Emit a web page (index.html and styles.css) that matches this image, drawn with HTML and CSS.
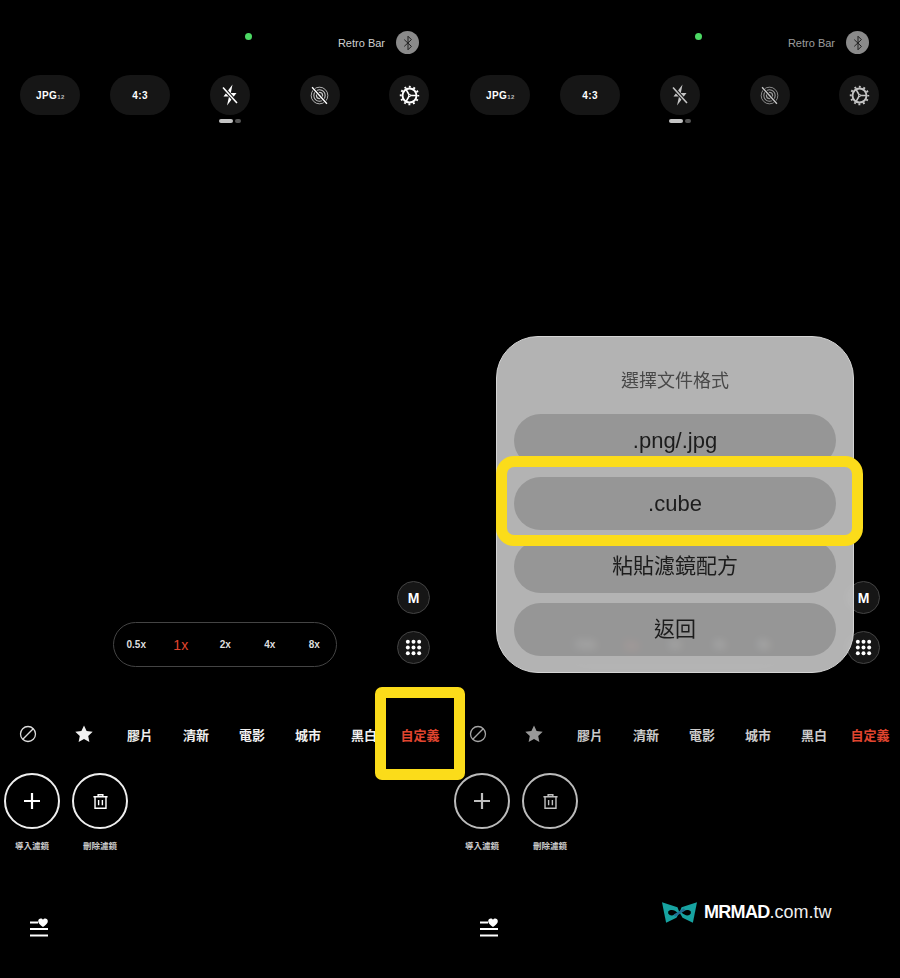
FILE: index.html
```html
<!DOCTYPE html>
<html lang="zh-Hant">
<head>
	<meta charset="UTF-8">
	<title>導入濾鏡</title>
	<link rel="stylesheet" href="styles.css">
</head>
<body>
	<svg class="sprite" xmlns="http://www.w3.org/2000/svg">
		<symbol id="i-bt" viewBox="0 0 24 24">
			<path d="M7 7.500l9.500 9-4.500 4.500V3l4.500 4.500-9.500 9" fill="none" stroke="currentColor" stroke-width="1.300"/>
		</symbol>
		<symbol id="i-flash" viewBox="0 0 24 24">
			<path d="M14.500 1.500L5.500 13.500h5.500L9 22.500l9.500-12.500h-5.700z" fill="currentColor"/>
			<path d="M5 4.500l14 15.500" stroke="#161616" stroke-width="3.600"/>
			<path d="M5 4.500l14 15.500" stroke="currentColor" stroke-width="1.600"/>
		</symbol>
		<symbol id="i-live" viewBox="0 0 24 24">
			<g fill="none" stroke="currentColor">
				<circle cx="12" cy="12" r="9.500" stroke-width="1" opacity=".75"/>
				<circle cx="12" cy="12" r="6.500" stroke-width="1.200" opacity=".75"/>
				<circle cx="12" cy="12" r="3.500" stroke-width="1.400" opacity=".75"/>
			</g>
			<path d="M3.500 2.500l17 19" stroke="#161616" stroke-width="3.600"/>
			<path d="M3.500 2.500l17 19" stroke="currentColor" stroke-width="1.600"/>
		</symbol>
		<symbol id="i-gear" viewBox="0 0 24 24">
			<g fill="none" stroke="currentColor">
				<circle cx="12" cy="12" r="8" stroke-width="2.200"/>
				<circle cx="12" cy="12" r="10" stroke-width="2.200" stroke-dasharray="2.240 3" stroke-dashoffset="1.100"/>
				<path d="M14 12h6M11 10.300L8 5M11 13.700L8 19" stroke-width="1.800"/>
				<path d="M14 12l-3-1.700v3.400z" stroke-width="1.200"/>
			</g>
		</symbol>
		<symbol id="i-none" viewBox="0 0 20 20">
			<circle cx="10" cy="10" r="7.500" fill="none" stroke="currentColor" stroke-width="1.300"/>
			<path d="M4.800 15.200L15.200 4.800" stroke="currentColor" stroke-width="1.300"/>
		</symbol>
		<symbol id="i-star" viewBox="0 0 20 20">
			<path d="M10 1.500l2.600 5.600 6.100.7-4.500 4.200 1.200 6L10 15l-5.400 3 1.200-6L1.300 7.800l6.100-.7z" fill="currentColor"/>
		</symbol>
		<symbol id="i-plus" viewBox="0 0 20 20">
			<path d="M10 2v16M2 10h16" stroke="currentColor" stroke-width="2.200"/>
		</symbol>
		<symbol id="i-trash" viewBox="0 0 18 18">
			<g fill="none" stroke="currentColor" stroke-width="1.500">
				<path d="M1.500 4h15M6.500 4V1.800h5V4"/>
				<path d="M3.200 4v12.200h11.600V4"/>
				<path d="M7 7.500v5.500M11 7.500v5.500"/>
			</g>
		</symbol>
		<symbol id="i-dots" viewBox="0 0 18 18">
			<g fill="currentColor">
				<circle cx="3" cy="3" r="2.100"/><circle cx="9" cy="3" r="2.100"/><circle cx="15" cy="3" r="2.100"/>
				<circle cx="3" cy="9" r="2.100"/><circle cx="9" cy="9" r="2.100"/><circle cx="15" cy="9" r="2.100"/>
				<circle cx="3" cy="15" r="2.100"/><circle cx="9" cy="15" r="2.100"/><circle cx="15" cy="15" r="2.100"/>
			</g>
		</symbol>
		<symbol id="i-fav" viewBox="0 0 18 19">
			<path d="M0 4.500h8M0 11h18M0 17.500h18" stroke="currentColor" stroke-width="2"/>
			<path d="M13 9C10 6.800 8.200 5.200 8.200 3.200 8.200 1.600 9.400.5 10.700.5c1 0 1.800.5 2.300 1.300C13.500 1 14.300.5 15.300.5c1.300 0 2.500 1.100 2.500 2.700C17.800 5.200 16 6.800 13 9z" fill="currentColor"/>
		</symbol>
	</svg>

	<div class="page">
		<!-- 左邊:相機畫面 -->
		<section class="screen">
			<div class="status">
				<span class="status_dot"></span>
				<span class="status_name">Retro Bar</span>
				<span class="status_bt"><svg><use href="#i-bt"/></svg></span>
			</div>
			<div class="toolbar">
				<div class="tool tool_pill">JPG<sub>12</sub></div>
				<div class="tool tool_pill">4:3</div>
				<div class="tool"><svg class="icon_flash"><use href="#i-flash"/></svg></div>
				<div class="tool"><svg class="icon_tool"><use href="#i-live"/></svg></div>
				<div class="tool"><svg class="icon_tool"><use href="#i-gear"/></svg></div>
			</div>
			<div class="pager"><span class="pager_on"></span><span class="pager_off"></span></div>
			<div class="controls">
				<div class="zoom">
					<span>0.5x</span><span class="zoom_on">1x</span><span>2x</span><span>4x</span><span>8x</span>
				</div>
				<div class="side">
					<div class="side_btn">M</div>
					<div class="side_btn"><svg class="icon_dots"><use href="#i-dots"/></svg></div>
				</div>
			</div>
			<div class="filters">
				<span><svg class="icon_none"><use href="#i-none"/></svg></span>
				<span><svg class="icon_star"><use href="#i-star"/></svg></span>
				<span>膠片</span><span>清新</span><span>電影</span><span>城市</span><span>黑白</span>
				<span class="filter_on">自定義</span>
			</div>
			<div class="actions">
				<div class="action">
					<div class="action_btn"><svg class="icon_plus"><use href="#i-plus"/></svg></div>
					<div class="action_label">導入濾鏡</div>
				</div>
				<div class="action">
					<div class="action_btn"><svg class="icon_trash"><use href="#i-trash"/></svg></div>
					<div class="action_label">刪除濾鏡</div>
				</div>
			</div>
			<div class="bottom"><svg class="icon_fav"><use href="#i-fav"/></svg></div>
			<div class="mark mark_filter"></div>
		</section>

		<!-- 右邊:選擇文件格式 -->
		<section class="screen screen_dim">
			<div class="status">
				<span class="status_dot"></span>
				<span class="status_name">Retro Bar</span>
				<span class="status_bt"><svg><use href="#i-bt"/></svg></span>
			</div>
			<div class="toolbar">
				<div class="tool tool_pill">JPG<sub>12</sub></div>
				<div class="tool tool_pill">4:3</div>
				<div class="tool"><svg class="icon_flash"><use href="#i-flash"/></svg></div>
				<div class="tool"><svg class="icon_tool"><use href="#i-live"/></svg></div>
				<div class="tool"><svg class="icon_tool"><use href="#i-gear"/></svg></div>
			</div>
			<div class="pager"><span class="pager_on"></span><span class="pager_off"></span></div>
			<div class="controls">
				<div class="zoom">
					<span>0.5x</span><span class="zoom_on">1x</span><span>2x</span><span>4x</span><span>8x</span>
				</div>
				<div class="side">
					<div class="side_btn">M</div>
					<div class="side_btn"><svg class="icon_dots"><use href="#i-dots"/></svg></div>
				</div>
			</div>
			<div class="filters">
				<span><svg class="icon_none"><use href="#i-none"/></svg></span>
				<span><svg class="icon_star"><use href="#i-star"/></svg></span>
				<span>膠片</span><span>清新</span><span>電影</span><span>城市</span><span>黑白</span>
				<span class="filter_on">自定義</span>
			</div>
			<div class="actions">
				<div class="action">
					<div class="action_btn"><svg class="icon_plus"><use href="#i-plus"/></svg></div>
					<div class="action_label">導入濾鏡</div>
				</div>
				<div class="action">
					<div class="action_btn"><svg class="icon_trash"><use href="#i-trash"/></svg></div>
					<div class="action_label">刪除濾鏡</div>
				</div>
			</div>
			<div class="bottom"><svg class="icon_fav"><use href="#i-fav"/></svg></div>

			<div class="dialog">
				<div class="dialog_title">選擇文件格式</div>
				<div class="dialog_btn dialog_btn_en">.png/.jpg</div>
				<div class="dialog_btn dialog_btn_en">.cube</div>
				<div class="dialog_btn">粘貼濾鏡配方</div>
				<div class="dialog_btn">返回</div>
			</div>
			<div class="mark mark_cube"></div>

			<div class="logo">
				<svg class="logo_mark" viewBox="0 0 34 20">
					<path d="M0 0l15 5 2 5-3 5-10 5z" fill="#17a3a1"/>
					<path d="M34 0L19 5l-2 5 3 5 10 5z" fill="#17a3a1"/>
					<path d="M6 9c3-3 7-1 9 1-3 3-7 4-9 1z" fill="#000"/>
					<path d="M28 9c-3-3-7-1-9 1 3 3 7 4 9 1z" fill="#000"/>
					<path d="M12 13l10-6" stroke="#1f6f94" stroke-width="2.500"/>
				</svg>
				<span class="logo_text"><b>MRMAD</b>.com.tw</span>
			</div>
		</section>
	</div>
</body>
</html>
```

FILE: styles.css
```css
* {
	padding: 0;
	margin: 0;
	box-sizing: border-box;
}
body {
	background: #000;
	color: #fff;
	font-family: "Liberation Sans", "Noto Sans CJK TC", sans-serif;
}
.sprite {
	display: none;
}
.page {
	display: flex;
	width: 900px;
	height: 978px;
	overflow: hidden;
}
.screen {
	position: relative;
	flex: 0 0 450px;
	min-width: 0;
	height: 978px;
}

/* 頂部狀態 */
.status {
	display: flex;
	align-items: center;
	height: 23px;
	margin-top: 31px;
	padding-right: 31px;
}
.status_dot {
	align-self: flex-start;
	width: 7px;
	height: 7px;
	margin: 2px auto 0 245px;
	border-radius: 50%;
	background: #4cd964;
}
.status_name {
	margin-right: 11px;
	font-size: 11px;
	color: #d0d0d0;
}
.status_bt {
	display: flex;
	align-items: center;
	justify-content: center;
	width: 23px;
	height: 23px;
	border-radius: 50%;
	background: #8a8a8a;
	color: #1c1c1c;
}
.status_bt svg {
	width: 18px;
	height: 18px;
}

/* 工具列 */
.toolbar {
	display: grid;
	grid-template-columns: repeat(5, 89.75px);
	justify-items: center;
	margin-top: 21px;
	padding-left: 5.5px;
}
.tool {
	display: flex;
	align-items: center;
	justify-content: center;
	width: 40px;
	height: 40px;
	border-radius: 20px;
	background: #161616;
	color: #fff;
}
.tool_pill {
	width: 60px;
	font-size: 10px;
	font-weight: bold;
	letter-spacing: .4px;
}
.tool_pill sub {
	padding-top: 3px;
	font-size: 6px;
	color: #bbb;
	vertical-align: baseline;
}
.icon_flash {
	width: 24px;
	height: 24px;
}
.icon_tool {
	width: 21px;
	height: 21px;
}
.pager {
	display: flex;
	gap: 2px;
	height: 4px;
	margin-top: 4px;
	padding-left: 219px;
}
.pager_on {
	width: 14px;
	border-radius: 2px;
	background: #c4c4c4;
}
.pager_off {
	width: 6px;
	border-radius: 2px;
	background: #555;
}

/* 變焦 */
.controls {
	display: flex;
	align-items: flex-end;
	margin-top: 458px;
	padding-left: 113px;
}
.zoom {
	display: grid;
	grid-template-columns: repeat(5, 44.5px);
	align-items: center;
	justify-items: center;
	width: 224px;
	height: 45px;
	border: 1px solid #444;
	border-radius: 23px;
	font-size: 10px;
	font-weight: bold;
	color: #ddd;
}
.zoom_on {
	font-size: 14px;
	font-weight: normal;
	color: #e0452f;
}
.side {
	display: flex;
	flex-direction: column;
	gap: 17px;
	margin: 0 0 3px 60px;
}
.side_btn {
	display: flex;
	align-items: center;
	justify-content: center;
	width: 33px;
	height: 33px;
	border: 1px solid #444;
	border-radius: 50%;
	background: #161616;
	font-size: 14px;
	font-weight: bold;
}
.icon_dots {
	width: 17px;
	height: 17px;
}

/* 濾鏡列 */
.filters {
	display: grid;
	grid-template-columns: repeat(8, 56px);
	align-items: center;
	justify-items: center;
	height: 28px;
	margin-top: 53px;
	font-size: 13px;
	font-weight: bold;
	color: #f0f0f0;
}
.filters span {
	display: flex;
	white-space: nowrap;
}
.filters .filter_on {
	color: #e0452f;
}
.icon_none {
	width: 20px;
	height: 20px;
	color: #ddd;
}
.icon_star {
	width: 20px;
	height: 20px;
}

/* 導入、刪除 */
.actions {
	display: flex;
	gap: 12px;
	margin-top: 25px;
	padding-left: 4px;
}
.action {
	width: 56px;
}
.action_btn {
	display: flex;
	align-items: center;
	justify-content: center;
	width: 56px;
	height: 56px;
	border: 2px solid #eee;
	border-radius: 50%;
}
.action_label {
	margin-top: 10px;
	font-size: 8.5px;
	font-weight: bold;
	line-height: 14px;
	text-align: center;
	color: #ccc;
}
.icon_plus {
	width: 20px;
	height: 20px;
}
.icon_trash {
	width: 17px;
	height: 17px;
}
.bottom {
	margin-top: 65px;
	padding-left: 30px;
}
.icon_fav {
	display: block;
	width: 18px;
	height: 19px;
}

/* 右邊畫面變暗 */
.screen_dim .tool svg,
.screen_dim .status_name,
.screen_dim .icon_star,
.screen_dim .icon_none,
.screen_dim .icon_trash,
.screen_dim .icon_plus {
	opacity: .75;
}
.screen_dim .filters {
	color: #ccc;
}
.screen_dim .action_btn {
	border-color: #bbb;
}

/* 對話框 */
.dialog {
	position: absolute;
	left: 46px;
	top: 336px;
	display: flex;
	flex-direction: column;
	gap: 10px;
	width: 358px;
	height: 337px;
	padding: 0 17px;
	border: 1px solid #d4d4d4;
	border-radius: 42px;
	background: rgba(218, 218, 218, .82);
	backdrop-filter: blur(4px);
	color: #1c1c1c;
}
.dialog_title {
	height: 67px;
	padding-top: 33px;
	font-size: 18px;
	line-height: 22px;
	text-align: center;
	color: #484848;
}
.dialog_btn {
	display: flex;
	align-items: center;
	justify-content: center;
	height: 53px;
	padding-bottom: 5px;
	border-radius: 27px;
	background: rgba(0, 0, 0, .16);
	font-size: 21px;
}
.dialog_btn_en {
	padding-bottom: 0;
	font-size: 22px;
}

/* 黃色標示框 */
.mark {
	position: absolute;
	border: 11px solid #fbdc1a;
}
.mark_filter {
	left: 375px;
	top: 687px;
	width: 90px;
	height: 93px;
	border-radius: 7px;
}
.mark_cube {
	left: 46px;
	top: 456px;
	width: 367px;
	height: 90px;
	border-radius: 18px;
}

/* 浮水印 */
.logo {
	position: absolute;
	left: 212px;
	top: 902px;
	display: flex;
	align-items: center;
	gap: 7px;
	color: #eee;
}
.logo_mark {
	width: 35px;
	height: 21px;
}
.logo_text {
	font-size: 18px;
}
.logo_text b {
	letter-spacing: -.7px;
	color: #fff;
}
```
